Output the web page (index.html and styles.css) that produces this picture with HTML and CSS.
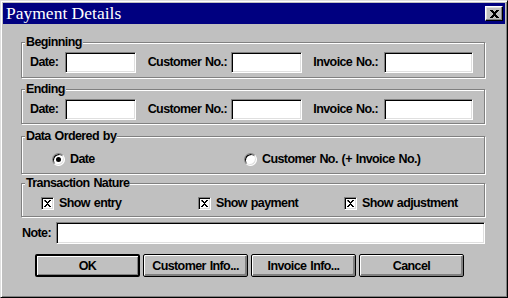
FILE: index.html
```html
<!DOCTYPE html>
<html>
<head>
<meta charset="utf-8">
<link rel="stylesheet" href="styles.css">
</head>
<body>
<div class="win">
  <div class="titlebar">
    <span class="title">Payment Details</span>
    <span class="close"><svg width="9" height="8" viewBox="0 0 9 8"><path d="M0 0h3v1h1v1h1v-1h1v-1h3v1h-1v1h-1v1h-1v2h1v1h1v1h1v1h-3v-1h-1v-1h-1v1h-1v1h-3v-1h1v-1h1v-1h1v-2h-1v-1h-1v-1h-1z" fill="#000"/></svg></span>
  </div>
  <div class="content">
    <div class="group g1">
      <span class="legend">Beginning</span>
      <div class="row">
        <label class="lab lab-date">Date:</label><span class="field f-short"></span>
        <label class="lab lab-cust">Customer No.:</label><span class="field f-short"></span>
        <label class="lab lab-inv">Invoice No.:</label><span class="field f-long"></span>
      </div>
    </div>
    <div class="group g2">
      <span class="legend">Ending</span>
      <div class="row">
        <label class="lab lab-date">Date:</label><span class="field f-short"></span>
        <label class="lab lab-cust">Customer No.:</label><span class="field f-short"></span>
        <label class="lab lab-inv">Invoice No.:</label><span class="field f-long"></span>
      </div>
    </div>
    <div class="group g3">
      <span class="legend">Data Ordered by</span>
      <div class="row">
        <span class="opt opt-r1"><span class="radio checked"></span>Date</span>
        <span class="opt opt-r2"><span class="radio"></span>Customer No. (+ Invoice No.)</span>
      </div>
    </div>
    <div class="group g4">
      <span class="legend">Transaction Nature</span>
      <div class="row">
        <span class="opt opt-c1"><span class="check"><svg width="7" height="7" viewBox="0 0 7 7"><path d="M0 0h2v1h1v1h1v-1h1v-1h2v1h-1v1h-1v1h-1v1h1v1h1v1h1v1h-2v-1h-1v-1h-1v1h-1v1h-2v-1h1v-1h1v-1h1v-1h-1v-1h-1z" fill="#000"/></svg></span>Show entry</span>
        <span class="opt opt-c2"><span class="check"><svg width="7" height="7" viewBox="0 0 7 7"><path d="M0 0h2v1h1v1h1v-1h1v-1h2v1h-1v1h-1v1h-1v1h1v1h1v1h1v1h-2v-1h-1v-1h-1v1h-1v1h-2v-1h1v-1h1v-1h1v-1h-1v-1h-1z" fill="#000"/></svg></span>Show payment</span>
        <span class="opt opt-c3"><span class="check"><svg width="7" height="7" viewBox="0 0 7 7"><path d="M0 0h2v1h1v1h1v-1h1v-1h2v1h-1v1h-1v1h-1v1h1v1h1v1h1v1h-2v-1h-1v-1h-1v1h-1v1h-2v-1h1v-1h1v-1h1v-1h-1v-1h-1z" fill="#000"/></svg></span>Show adjustment</span>
      </div>
    </div>
    <div class="note-row">
      <label class="lab lab-note">Note:</label><span class="field f-note"></span>
    </div>
    <div class="buttons">
      <span class="btn default">OK</span>
      <span class="btn">Customer Info...</span>
      <span class="btn">Invoice Info...</span>
      <span class="btn">Cancel</span>
    </div>
  </div>
</div>
</body>
</html>
```
FILE: styles.css
```css
* { box-sizing: border-box; }
html, body { margin: 0; padding: 0; background: #c0c0c0; }
body { width: 508px; height: 298px; overflow: hidden; }

.win {
  width: 508px;
  height: 298px;
  background: #c0c0c0;
  border: 1px solid;
  border-color: #dfdfdf #000 #000 #dfdfdf;
  box-shadow: inset 1px 1px 0 #fff, inset -1px -1px 0 #808080;
  padding: 2px;
  display: flex;
  flex-direction: column;
  font-family: "Liberation Sans", Arial, sans-serif;
  font-weight: bold;
  font-size: 12.5px;
  letter-spacing: -0.6px;
  word-spacing: 1px;
  color: #000;
}

.titlebar {
  height: 21px;
  background: #000080;
  display: flex;
  align-items: center;
  justify-content: space-between;
  padding: 0 2px 0 3px;
}
.title {
  font-family: "Liberation Serif", "Times New Roman", serif;
  font-weight: normal;
  font-size: 17.5px;
  letter-spacing: 0;
  word-spacing: 0;
  color: #fff;
  line-height: 21px;
}
.close {
  width: 18px;
  height: 15px;
  background: #c0c0c0;
  border: 1px solid;
  border-color: #fff #000 #000 #fff;
  box-shadow: inset -1px -1px 0 #808080, inset 1px 1px 0 #dfdfdf;
  display: flex;
  align-items: center;
  justify-content: center;
}
.close svg { display: block; }

.content {
  display: flex;
  flex-direction: column;
  padding: 18px 0 0 18px;
}

.group {
  position: relative;
  width: 464px;
  border: 1px solid #808080;
  box-shadow: inset 1px 1px 0 #fff, 1px 1px 0 #fff;
}
.legend {
  position: absolute;
  left: 3px;
  top: -8px;
  line-height: 14px;
  padding: 0 1px 0 1px;
  background: #c0c0c0;
}
.g1 { height: 36px; padding: 9px 0 0 8px; }
.g2 { height: 35px; margin-top: 11px; padding: 9px 0 0 8px; }
.g3 { height: 38px; margin-top: 12px; padding: 15px 0 0 30px; }
.g4 { height: 34px; margin-top: 9px; padding: 12px 0 0 19px; }

.row { display: flex; align-items: center; }

.lab { display: inline-block; line-height: 21px; white-space: nowrap; }
.lab-date { width: 35px; }
.lab-cust { width: 95px; text-align: right; padding-right: 4px; }
.lab-inv { width: 82px; text-align: right; padding-right: 6px; }

.field {
  display: inline-block;
  height: 21px;
  background: #fff;
  border: 1px solid;
  border-color: #808080 #fff #fff #808080;
  box-shadow: inset 1px 1px 0 #000, inset -1px -1px 0 #dfdfdf;
}
.f-short { width: 71px; }
.f-long { width: 89px; }

.opt { display: inline-flex; align-items: center; white-space: nowrap; }
.opt-r1 { width: 192px; }
.opt-c1 { width: 157px; }
.opt-c2 { width: 146px; }

.radio {
  position: relative;
  width: 13px;
  height: 13px;
  border-radius: 50%;
  background: #fff;
  border: 1px solid;
  border-color: #808080 #fff #fff #808080;
  box-shadow: inset 1px 1px 0 #000, inset -1px -1px 0 #dfdfdf;
  margin-right: 5px;
}
.radio.checked::after {
  content: "";
  position: absolute;
  left: 3px;
  top: 3px;
  width: 5px;
  height: 5px;
  border-radius: 50%;
  background: #000;
}

.check {
  width: 13px;
  height: 13px;
  background: #fff;
  border: 1px solid;
  border-color: #808080 #fff #fff #808080;
  box-shadow: inset 1px 1px 0 #000, inset -1px -1px 0 #dfdfdf;
  display: flex;
  align-items: center;
  justify-content: center;
  margin-right: 5px;
}
.check svg { display: block; }

.note-row {
  display: flex;
  align-items: center;
  margin-top: 5px;
  margin-left: 1px;
}
.lab-note { width: 34px; }
.f-note { width: 429px; height: 22px; }

.buttons {
  display: flex;
  gap: 3px;
  margin-top: 10px;
  margin-left: 14px;
}
.btn {
  width: 105px;
  height: 23px;
  display: flex;
  align-items: center;
  justify-content: center;
  border: 1px solid #000;
  border-radius: 2px;
  box-shadow: inset 1px 1px 0 #fff, inset -2px -2px 0 #808080;
  background: #c0c0c0;
}
.btn.default {
  border-width: 2px;
  box-shadow: inset 1px 1px 0 #fff, inset -1px -1px 0 #808080;
}
```
